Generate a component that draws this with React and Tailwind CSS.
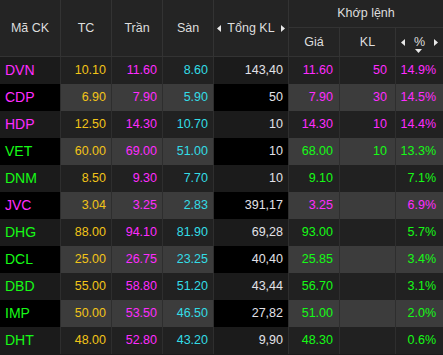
const UP = "text-[#16fa16]";
const CE = "text-[#ff2cff]";

const rows = [
  { sym: "DVN", tc: "10.10", tran: "11.60", san: "8.60", vol: "143,40", gia: "11.60", kl: "50", pct: "14.9%", c: CE },
  { sym: "CDP", tc: "6.90", tran: "7.90", san: "5.90", vol: "50", gia: "7.90", kl: "30", pct: "14.5%", c: CE },
  { sym: "HDP", tc: "12.50", tran: "14.30", san: "10.70", vol: "10", gia: "14.30", kl: "10", pct: "14.4%", c: CE },
  { sym: "VET", tc: "60.00", tran: "69.00", san: "51.00", vol: "10", gia: "68.00", kl: "10", pct: "13.3%", c: UP },
  { sym: "DNM", tc: "8.50", tran: "9.30", san: "7.70", vol: "10", gia: "9.10", kl: "", pct: "7.1%", c: UP },
  { sym: "JVC", tc: "3.04", tran: "3.25", san: "2.83", vol: "391,17", gia: "3.25", kl: "", pct: "6.9%", c: CE },
  { sym: "DHG", tc: "88.00", tran: "94.10", san: "81.90", vol: "69,28", gia: "93.00", kl: "", pct: "5.7%", c: UP },
  { sym: "DCL", tc: "25.00", tran: "26.75", san: "23.25", vol: "40,40", gia: "25.85", kl: "", pct: "3.4%", c: UP },
  { sym: "DBD", tc: "55.00", tran: "58.80", san: "51.20", vol: "43,44", gia: "56.70", kl: "", pct: "3.1%", c: UP },
  { sym: "IMP", tc: "50.00", tran: "53.50", san: "46.50", vol: "27,82", gia: "51.00", kl: "", pct: "2.0%", c: UP },
  { sym: "DHT", tc: "48.00", tran: "52.80", san: "43.20", vol: "9,90", gia: "48.30", kl: "", pct: "0.6%", c: UP },
];

const cols = "grid grid-cols-[61px_51px_51px_51px_75px_51px_56px_47px]";

function Tri({ dir }) {
  return (
    <svg width="4" height="7" viewBox="0 0 4 7" className="shrink-0">
      {dir === "l" ? <path d="M4 0V7L0 3.5Z" fill="#e8e8e8" /> : <path d="M0 0V7L4 3.5Z" fill="#e8e8e8" />}
    </svg>
  );
}

function Header() {
  const cell = "flex items-center justify-center border-r border-b border-[#333] text-[#dedede]";
  return (
    <div className={`${cols} grid-rows-[28px_29px] bg-[#242424] text-[12.5px]`}>
      <div className={`${cell} row-span-2`}>Mã CK</div>
      <div className={`${cell} row-span-2`}>TC</div>
      <div className={`${cell} row-span-2`}>Trần</div>
      <div className={`${cell} row-span-2`}>Sàn</div>
      <div className={`${cell} row-span-2 gap-[6px]`}>
        <Tri dir="l" />
        <span>Tổng KL</span>
        <Tri dir="r" />
      </div>
      <div className={`${cell} col-span-3 border-r-0`}>Khớp lệnh</div>
      <div className={cell}>Giá</div>
      <div className={cell}>KL</div>
      <div className={`${cell} border-r-0 relative gap-[9px]`}>
        <Tri dir="l" />
        <span>%</span>
        <Tri dir="r" />
        <svg width="7" height="4" viewBox="0 0 7 4" className="absolute left-[19px] top-[21px]">
          <path d="M0 0H7L3.5 4Z" fill="#e8e8e8" />
        </svg>
      </div>
    </div>
  );
}

function Row({ r, i }) {
  const light = i % 2 === 1;
  const side = light ? "bg-black" : "bg-[#1b1b1b]";
  const mid = light ? "bg-[#3c3c3c]" : "bg-[#212121]";
  const num = "flex items-center justify-end border-r border-[#2e2e2e]";
  return (
    <div className={`${cols} h-[27px] text-[12.5px]`}>
      <div className={`${side} ${r.c} flex items-center pl-[5px] text-[14px] border-r border-[#2e2e2e]`}>{r.sym}</div>
      <div className={`${mid} ${num} pr-[5px] text-[#f2c418]`}>{r.tc}</div>
      <div className={`${mid} ${num} pr-[5px] text-[#ff2cff]`}>{r.tran}</div>
      <div className={`${mid} ${num} pr-[5px] text-[#33dde6]`}>{r.san}</div>
      <div className={`${side} ${num} pr-[5px] text-[#e2e2e8]`}>{r.vol}</div>
      <div className={`${mid} ${num} pr-[6px] ${r.c}`}>{r.gia}</div>
      <div className={`${mid} ${num} pr-[8px] ${r.c}`}>{r.kl}</div>
      <div className={`${mid} flex items-center justify-end pr-[7px] ${r.c}`}>{r.pct}</div>
    </div>
  );
}

export default function App() {
  return (
    <div className="w-[443px] h-[355px] overflow-hidden bg-[#1b1b1b] font-['Liberation_Sans',Arial,sans-serif]">
      <Header />
      {rows.map((r, i) => (
        <Row key={r.sym} r={r} i={i} />
      ))}
    </div>
  );
}
